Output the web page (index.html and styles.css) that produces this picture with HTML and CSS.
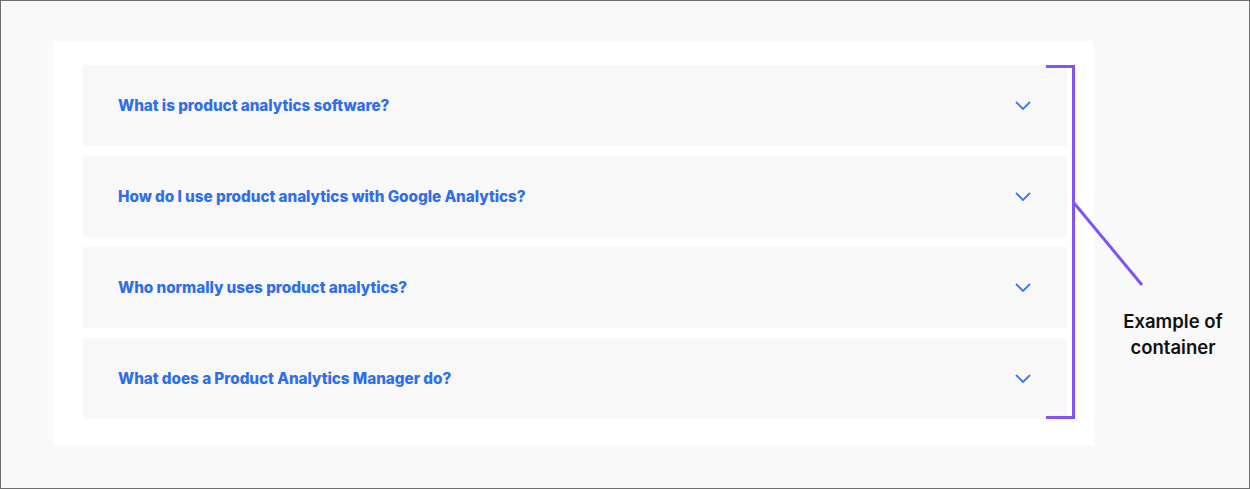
FILE: index.html
```html
<!DOCTYPE html>
<html lang="en">
<head>
<meta charset="utf-8">
<title>FAQ container</title>
<link rel="stylesheet" href="styles.css">
</head>
<body>
<div class="frame">
  <section class="container">
    <div class="faq-item"><span class="q">What is product analytics software?</span><svg class="chev" viewBox="0 0 16 9" width="16" height="9"><path d="M1 1 L8 8 L15 1" fill="none" stroke="currentColor" stroke-width="1.8"/></svg></div>
    <div class="faq-item"><span class="q">How do I use product analytics with Google Analytics?</span><svg class="chev" viewBox="0 0 16 9" width="16" height="9"><path d="M1 1 L8 8 L15 1" fill="none" stroke="currentColor" stroke-width="1.8"/></svg></div>
    <div class="faq-item"><span class="q">Who normally uses product analytics?</span><svg class="chev" viewBox="0 0 16 9" width="16" height="9"><path d="M1 1 L8 8 L15 1" fill="none" stroke="currentColor" stroke-width="1.8"/></svg></div>
    <div class="faq-item"><span class="q">What does a Product Analytics Manager do?</span><svg class="chev" viewBox="0 0 16 9" width="16" height="9"><path d="M1 1 L8 8 L15 1" fill="none" stroke="currentColor" stroke-width="1.8"/></svg></div>
  </section>
  <svg class="annotation" width="1250" height="489" viewBox="0 0 1250 489">
    <path d="M1046 66.5 H1073.5 V417.5 H1046" fill="none" stroke="#8052f7" stroke-width="3"/>
    <path d="M1074 203 L1142 285" fill="none" stroke="#8052f7" stroke-width="3"/>
  </svg>
  <div class="label">Example of<br>container</div>
</div>
</body>
</html>
```
FILE: styles.css
```css
* { box-sizing: border-box; }
html, body { margin: 0; padding: 0; }
body { background: #f9f9f9; }
.frame {
  position: relative;
  width: 1250px;
  height: 489px;
  border: 1px solid #6f6f6f;
  background: #f9f9f9;
  padding: 40px 0 0 52px;
}
.container {
  width: 1041px;
  background: #ffffff;
  padding: 24px 27px 27px 30px;
  display: flex;
  flex-direction: column;
  gap: 10px;
}
.faq-item {
  height: 81px;
  background: #f8f8f8;
  display: flex;
  align-items: center;
  justify-content: space-between;
  padding: 0 36px 0 35px;
}
.q {
  font-family: Inter, "Liberation Sans", sans-serif;
  font-weight: 800;
  font-size: 15.3px;
  letter-spacing: -0.05px;
  color: #2e6fe9;
}
.chev { color: #3a78ee; display: block; }
.annotation {
  position: absolute;
  left: -1px;
  top: -1px;
  pointer-events: none;
}
.label {
  position: absolute;
  left: 1100px;
  top: 307px;
  width: 144px;
  text-align: center;
  font-family: Inter, "Liberation Sans", sans-serif;
  font-weight: 600;
  font-size: 18.5px;
  line-height: 26px;
  color: #111;
}
```
